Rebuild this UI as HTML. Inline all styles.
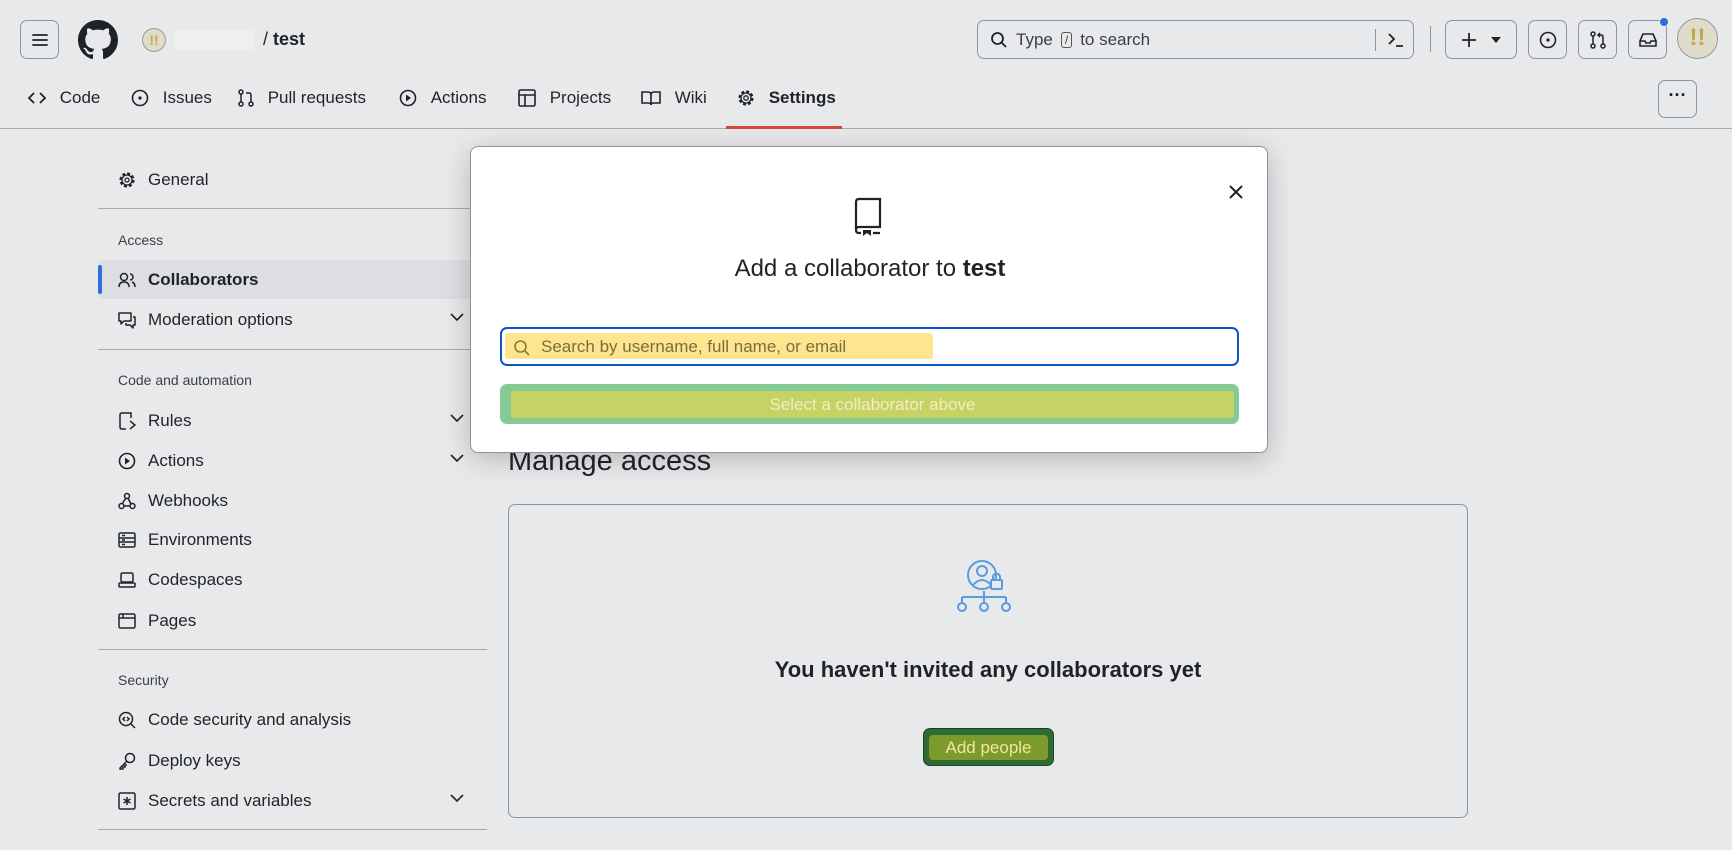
<!DOCTYPE html>
<html><head><meta charset="utf-8"><style>
*{box-sizing:border-box;margin:0;padding:0}
body{width:1732px;height:850px;overflow:hidden;background:#e8e9eb;font-family:"Liberation Sans",sans-serif;color:#1f2328;position:relative}
.abs{position:absolute}
.btn{position:absolute;border:1px solid #8c959f;border-radius:7px;background:#e8e9eb;display:flex;align-items:center;justify-content:center}
svg{display:block}
.tab{position:absolute;top:88px;display:flex;align-items:center;gap:9px;font-size:17px;color:#1f2328}
.side{position:absolute;left:118px;display:flex;align-items:center;gap:12px;font-size:17px}
.sh{position:absolute;left:118px;font-size:14px;color:#3a3f45}
.hr{position:absolute;left:98px;width:389px;height:1px;background:#a6abb2}
.chev{position:absolute;left:450px}
</style></head><body>
<div class="btn" style="left:20px;top:20px;width:39px;height:39px"><svg width="18" height="16"><path d="M2 3h14M2 8h14M2 13h14" stroke="#1f2328" stroke-width="1.8" stroke-linecap="round"/></svg></div>
<svg class="abs" style="left:78px;top:20px" width="40" height="40" viewBox="0 0 16 16"><path fill="#1f2328" d="M8 0C3.58 0 0 3.58 0 8c0 3.540 2.29 6.53 5.47 7.59.4.07.55-.17.55-.38 0-.19-.01-.82-.01-1.49-2.010.37-2.53-.49-2.69-.94-.09-.23-.48-.94-.82-1.13-.28-.15-.68-.52-.01-.53.63-.01 1.08.58 1.23.82.72 1.21 1.870.87 2.33.66.07-.52.28-.87.51-1.07-1.78-.2-3.64-.89-3.64-3.95 0-.87.31-1.59.82-2.15-.08-.2-.36-1.02.08-2.12 0 0 .67-.21 2.2.82.64-.18 1.32-.27 2-.27.68 0 1.36.09 2 .27 1.53-1.04 2.2-.82 2.2-.82.44 1.1.16 1.92.08 2.12.51.56.82 1.27.82 2.15 0 3.07-1.87 3.75-3.65 3.95.29.25.54.73.54 1.48 0 1.07-.01 1.93-.01 2.2 0 .21.15.46.55.38A8.013 8.013 0 0016 8c0-4.42-3.58-8-8-8z"/></svg>
<div class="abs" style="left:142px;top:28px;width:24px;height:24px;border-radius:50%;background:#e0dccb;border:1px solid #999;font-weight:bold;color:#c9a64a;font-size:14px;text-align:center;line-height:22px">!!</div>
<div class="abs" style="left:174px;top:30px;width:80px;height:20px;background:#eeeff1;border-radius:4px"></div>
<div class="abs" style="left:263px;top:29px;font-size:18px">/ <b>test</b></div>
<div class="btn" style="left:977px;top:20px;width:437px;height:39px;justify-content:flex-start;padding-left:12px;gap:8px;font-size:17px;color:#3a3f45"><svg width="18" height="18"><circle cx="7.5" cy="7.5" r="5.5" stroke="#1f2328" stroke-width="1.8" fill="none"/><path d="M11.5 11.5l4.5 4.5" stroke="#1f2328" stroke-width="1.8"/></svg>Type <span style="border:1px solid #555;border-radius:3px;font-size:12px;padding:0 3px">/</span> to search
<div class="abs" style="left:397px;top:8px;width:1px;height:22px;background:#8c959f"></div>
<svg class="abs" style="left:409px;top:11px" width="18" height="16"><path d="M2 2l5 5-5 5M9 14h7" stroke="#1f2328" stroke-width="1.8" fill="none"/></svg></div>
<div class="abs" style="left:1430px;top:26px;width:1px;height:26px;background:#8c959f"></div>
<div class="btn" style="left:1445px;top:20px;width:72px;height:39px;gap:14px"><svg width="16" height="16"><path d="M8 1v14M1 8h14" stroke="#1f2328" stroke-width="1.8"/></svg><svg width="10" height="6"><path d="M0 0h10L5 6z" fill="#1f2328"/></svg></div>
<div class="btn" style="left:1528px;top:20px;width:39px;height:39px"><svg width="18" height="18"><circle cx="9" cy="9" r="7.5" stroke="#1f2328" stroke-width="1.6" fill="none"/><circle cx="9" cy="9" r="1.6" fill="#1f2328"/></svg></div>
<div class="btn" style="left:1578px;top:20px;width:39px;height:39px"><svg width="16" height="18"><circle cx="3" cy="3" r="2" stroke="#1f2328" stroke-width="1.5" fill="none"/><circle cx="3" cy="15" r="2" stroke="#1f2328" stroke-width="1.5" fill="none"/><circle cx="13" cy="15" r="2" stroke="#1f2328" stroke-width="1.5" fill="none"/><path d="M3 5v8M13 13V6q0-2-2-2H8M10 2L8 4l2 2" stroke="#1f2328" stroke-width="1.5" fill="none"/></svg></div>
<div class="btn" style="left:1628px;top:20px;width:39px;height:39px"><svg width="18" height="16"><path d="M1 9l3-7h10l3 7v5H1zM1 9h5l1 2h4l1-2h5" stroke="#1f2328" stroke-width="1.6" fill="none" stroke-linejoin="round"/></svg></div>
<div class="abs" style="left:1659px;top:17px;width:10px;height:10px;border-radius:50%;background:#2f6fdb;border:1.5px solid #e8e9eb"></div>
<div class="abs" style="left:1677px;top:18px;width:41px;height:41px;border-radius:50%;background:#e0dccb;border:1px solid #999;font-weight:bold;color:#c9a64a;font-size:24px;text-align:center;line-height:38px">!!</div>
<div class="tab" style="left:28px"><svg width="18" height="14"><path d="M6 2L1 7l5 5M12 2l5 5-5 5" stroke="#1f2328" stroke-width="1.7" fill="none"/></svg>&nbsp;Code</div>
<div class="tab" style="left:131px"><svg width="18" height="18"><circle cx="9" cy="9" r="7.5" stroke="#1f2328" stroke-width="1.6" fill="none"/><circle cx="9" cy="9" r="1.6" fill="#1f2328"/></svg>&nbsp;Issues</div>
<div class="tab" style="left:238px"><svg width="16" height="18"><circle cx="3" cy="3" r="2" stroke="#1f2328" stroke-width="1.5" fill="none"/><circle cx="3" cy="15" r="2" stroke="#1f2328" stroke-width="1.5" fill="none"/><circle cx="13" cy="15" r="2" stroke="#1f2328" stroke-width="1.5" fill="none"/><path d="M3 5v8M13 13V6q0-2-2-2H8" stroke="#1f2328" stroke-width="1.5" fill="none"/></svg>&nbsp;Pull requests</div>
<div class="tab" style="left:399px"><svg width="18" height="18"><circle cx="9" cy="9" r="7.5" stroke="#1f2328" stroke-width="1.6" fill="none"/><path d="M7 5.5v7l5-3.5z" fill="#1f2328"/></svg>&nbsp;Actions</div>
<div class="tab" style="left:518px"><svg width="18" height="18"><rect x="1" y="1" width="16" height="16" rx="1.5" stroke="#1f2328" stroke-width="1.6" fill="none"/><path d="M1 6h16M7 6v11" stroke="#1f2328" stroke-width="1.6"/></svg>&nbsp;Projects</div>
<div class="tab" style="left:641px"><svg width="20" height="16"><path d="M1 2h6q3 0 3 3v10q0-2-3-2H1zM19 2h-6q-3 0-3 3v10q0-2 3-2h6z" stroke="#1f2328" stroke-width="1.6" fill="none"/></svg>&nbsp;Wiki</div>
<div class="tab" style="left:737px;font-weight:bold"><svg width="18" height="18"><circle cx="9" cy="9" r="6.5" stroke="#1f2328" stroke-width="2.2" stroke-dasharray="3 2.1" fill="none"/><circle cx="9" cy="9" r="5" stroke="#1f2328" stroke-width="1.3" fill="#e8e9eb"/><circle cx="9" cy="9" r="2.2" stroke="#1f2328" stroke-width="1.3" fill="none"/></svg>&nbsp;Settings</div>
<div class="abs" style="left:0;top:128px;width:1732px;height:1px;background:#a6abb2"></div>
<div class="abs" style="left:726px;top:126px;width:116px;height:3px;background:#d8473c"></div>
<div class="btn" style="left:1658px;top:80px;width:39px;height:38px;font-weight:bold;font-size:18px;padding-bottom:8px">···</div>
<div class="side" style="top:170px"><svg width="18" height="18"><circle cx="9" cy="9" r="6.5" stroke="#1f2328" stroke-width="2.2" stroke-dasharray="3 2.1" fill="none"/><circle cx="9" cy="9" r="5" stroke="#1f2328" stroke-width="1.3" fill="#e8e9eb"/><circle cx="9" cy="9" r="2" stroke="#1f2328" stroke-width="1.3" fill="none"/></svg>General</div>
<div class="hr" style="top:208px"></div>
<div class="sh" style="top:232px">Access</div>
<div class="abs" style="left:98px;top:260px;width:389px;height:39px;background:#dcdee1;border-radius:6px"></div>
<div class="abs" style="left:98px;top:265px;width:4px;height:29px;background:#2f6fdb;border-radius:2px"></div>
<div class="side" style="top:270px;font-weight:bold"><svg width="18" height="16"><circle cx="6" cy="5" r="3.5" stroke="#1f2328" stroke-width="1.5" fill="none"/><path d="M1 15q0-5 5-5t5 5M12 2a3 3 0 010 6M14 10q3 1 3 5" stroke="#1f2328" stroke-width="1.5" fill="none"/></svg>Collaborators</div>
<div class="side" style="top:310px"><svg width="18" height="18"><path d="M1 2h12v8H6l-3 3v-3H1zM15 6h2v8h-2v3l-3-3H8v-2" stroke="#1f2328" stroke-width="1.5" fill="none" stroke-linejoin="round"/></svg>Moderation options</div>
<div class="hr" style="top:349px"></div>
<div class="sh" style="top:372px">Code and automation</div>
<div class="side" style="top:411px"><svg width="18" height="18"><path d="M2 3q0-2 2-2h9v5M2 3v12q0 2 2 2h4M12 9l5 4-5 4" stroke="#1f2328" stroke-width="1.5" fill="none"/></svg>Rules</div>
<div class="side" style="top:451px"><svg width="18" height="18"><circle cx="9" cy="9" r="7.5" stroke="#1f2328" stroke-width="1.6" fill="none"/><path d="M7 5.5v7l5-3.5z" fill="#1f2328"/></svg>Actions</div>
<div class="side" style="top:491px"><svg width="18" height="18"><circle cx="9" cy="4" r="2.5" stroke="#1f2328" stroke-width="1.5" fill="none"/><circle cx="3.5" cy="14" r="2.5" stroke="#1f2328" stroke-width="1.5" fill="none"/><circle cx="14.5" cy="14" r="2.5" stroke="#1f2328" stroke-width="1.5" fill="none"/><path d="M8 6l-4 6M10 6l3 6M6 14h6" stroke="#1f2328" stroke-width="1.5"/></svg>Webhooks</div>
<div class="side" style="top:530px"><svg width="18" height="16"><rect x="1" y="1" width="16" height="14" rx="1.5" stroke="#1f2328" stroke-width="1.5" fill="none"/><path d="M1 6h16M1 10h16M4 3.5h3M4 8h3M4 12.5h3" stroke="#1f2328" stroke-width="1.5"/></svg>Environments</div>
<div class="side" style="top:570px"><svg width="18" height="16"><rect x="3" y="1" width="12" height="9" rx="1.5" stroke="#1f2328" stroke-width="1.5" fill="none"/><rect x="1" y="11" width="16" height="4" rx="1" stroke="#1f2328" stroke-width="1.5" fill="none"/></svg>Codespaces</div>
<div class="side" style="top:611px"><svg width="18" height="16"><rect x="1" y="1" width="16" height="14" rx="1.5" stroke="#1f2328" stroke-width="1.5" fill="none"/><path d="M1 5h16M5 1v4" stroke="#1f2328" stroke-width="1.5"/></svg>Pages</div>
<div class="hr" style="top:649px"></div>
<div class="sh" style="top:672px">Security</div>
<div class="side" style="top:710px"><svg width="18" height="18"><circle cx="8" cy="8" r="6.5" stroke="#1f2328" stroke-width="1.5" fill="none"/><path d="M12.5 12.5l4.5 4.5M7 6l-2 2 2 2M9 6l2 2-2 2" stroke="#1f2328" stroke-width="1.5" fill="none"/></svg>Code security and analysis</div>
<div class="side" style="top:751px"><svg width="18" height="18"><circle cx="12" cy="6" r="4.5" stroke="#1f2328" stroke-width="1.5" fill="none"/><path d="M9 9l-7 7v1h3v-2h2v-2h2" stroke="#1f2328" stroke-width="1.5" fill="none"/></svg>Deploy keys</div>
<div class="side" style="top:791px"><svg width="18" height="18"><rect x="1" y="1" width="16" height="16" rx="1.5" stroke="#1f2328" stroke-width="1.5" fill="none"/><path d="M9 5v8M5.5 7l7 4M12.5 7l-7 4" stroke="#1f2328" stroke-width="1.5"/></svg>Secrets and variables</div>
<div class="hr" style="top:829px"></div>
<svg class="chev" style="top:313px" width="14" height="9"><path d="M1 1l6 6 6-6" stroke="#1f2328" stroke-width="1.6" fill="none"/></svg>
<svg class="chev" style="top:414px" width="14" height="9"><path d="M1 1l6 6 6-6" stroke="#1f2328" stroke-width="1.6" fill="none"/></svg>
<svg class="chev" style="top:454px" width="14" height="9"><path d="M1 1l6 6 6-6" stroke="#1f2328" stroke-width="1.6" fill="none"/></svg>
<svg class="chev" style="top:794px" width="14" height="9"><path d="M1 1l6 6 6-6" stroke="#1f2328" stroke-width="1.6" fill="none"/></svg>
<div class="abs" style="left:508px;top:445px;font-size:29px">Manage access</div>
<div class="abs" style="left:508px;top:504px;width:960px;height:314px;border:1px solid #8c959f;border-radius:7px"></div>
<svg class="abs" style="left:955px;top:558px" width="64" height="62"><g stroke="#5b9be0" stroke-width="2" fill="none"><circle cx="27" cy="17" r="14"/><circle cx="27" cy="13" r="5"/><path d="M18 27q9-10 18 0"/><rect x="36" y="22" width="11" height="9" rx="1" fill="#e8e9eb"/><path d="M38 22v-3a3.5 3.5 0 017 0v3"/><path d="M29 33v6M7 39h44M7 39v6M29 39v6M51 39v6"/><circle cx="7" cy="49" r="4"/><circle cx="29" cy="49" r="4"/><circle cx="51" cy="49" r="4"/></g></svg>
<div class="abs" style="left:508px;top:657px;width:960px;text-align:center;font-size:22px;font-weight:bold">You haven't invited any collaborators yet</div>
<div class="abs" style="left:923px;top:728px;width:131px;height:38px;background:#2f6b35;border:1px solid #1c4420;border-radius:7px"></div>
<div class="abs" style="left:929px;top:735px;width:119px;height:25px;background:#7d9a2c;border-radius:4px;color:#f3e79a;font-size:17px;text-align:center;line-height:25px">Add people</div>
<div class="abs" style="left:470px;top:146px;width:798px;height:307px;background:#fff;border:1px solid #8c959f;border-radius:8px;box-shadow:0 6px 28px rgba(0,0,0,.22)">
<svg class="abs" style="left:758px;top:38px" width="14" height="14"><path d="M1 1l12 12M13 1L1 13" stroke="#1f2328" stroke-width="2"/></svg>
<svg class="abs" style="left:382px;top:50px" width="30" height="40"><path d="M3 33V5q0-3 3-3h21v28H6q-3 0-3 3t3 3h2M20 36h7" stroke="#1f2328" stroke-width="2.2" fill="none"/><path d="M10 33h8v6l-4-3-4 3z" fill="#1f2328"/></svg>
<div class="abs" style="left:0;top:108px;width:798px;text-align:center;font-size:24px">Add a collaborator to <b>test</b></div>
<div class="abs" style="left:29px;top:180px;width:739px;height:39px;border:2px solid #0b55c6;border-radius:7px"></div>
<div class="abs" style="left:34px;top:186px;width:428px;height:26px;background:#fde68f;border-radius:3px"></div>
<svg class="abs" style="left:42px;top:192px" width="18" height="18"><circle cx="7.5" cy="7.5" r="5.5" stroke="#8a7a3a" stroke-width="1.6" fill="none"/><path d="M11.5 11.5l4.5 4.5" stroke="#8a7a3a" stroke-width="1.6"/></svg>
<div class="abs" style="left:70px;top:190px;font-size:17px;color:#7a6e3a">Search by username, full name, or email</div>
<div class="abs" style="left:29px;top:237px;width:739px;height:40px;background:#85c995;border-radius:7px"></div>
<div class="abs" style="left:40px;top:244px;width:723px;height:27px;background:#c7d264;border-radius:3px;color:#f2eec0;font-size:17px;text-align:center;line-height:27px">Select a collaborator above</div>
</div>
</body></html>
